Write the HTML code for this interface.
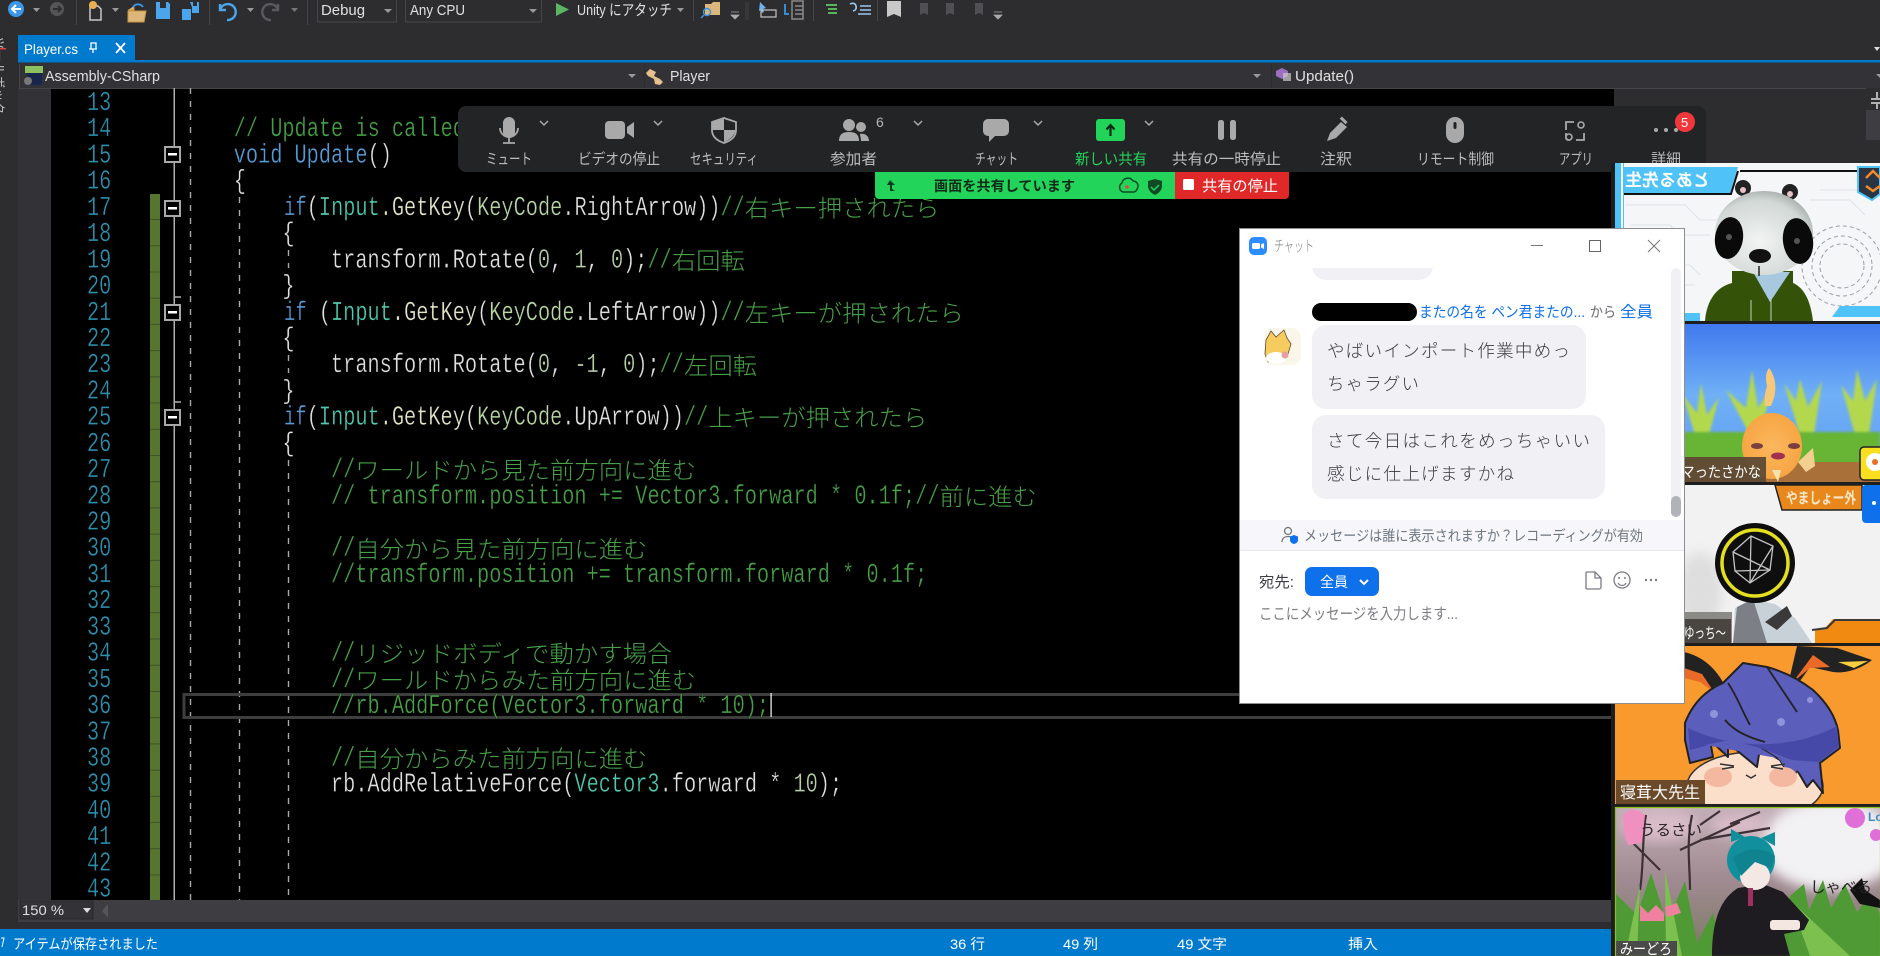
<!DOCTYPE html>
<html lang="ja"><head><meta charset="utf-8"><title>Player.cs</title>
<style>
html,body{margin:0;padding:0;background:#000;width:1880px;height:956px;overflow:hidden}
svg{display:block}
text{font-family:"Liberation Sans","Noto Sans CJK JP",sans-serif;white-space:pre}
.m{font-family:"Liberation Mono","Noto Sans CJK JP",monospace;font-size:27px;stroke:#000;stroke-width:.35px}
.j{font-family:"Noto Sans CJK JP","Liberation Sans",sans-serif;font-size:23.5px;font-weight:300;fill:#46a046}
.g{fill:#46a046}.w{fill:#e0e0e0}.t{fill:#4ec9b0}.b{fill:#569cd6}.k{fill:#b8d7a3}.n{fill:#b5cea8}.y{fill:#e4e4c8}
.ln{fill:#2b91af}
.u{font-size:14px;fill:#e0e0e0}
.z{font-size:15px;fill:#bcbcbc;font-family:"Noto Sans CJK JP","Liberation Sans",sans-serif;font-weight:400}
.c{font-size:17.5px;fill:#3a3a44;font-family:"Noto Sans CJK JP","Liberation Sans",sans-serif;font-weight:300}
</style></head><body>
<svg xmlns="http://www.w3.org/2000/svg" width="1880" height="956" viewBox="0 0 1880 956">
<defs>
<clipPath id="t1"><rect x="1615" y="163" width="265" height="158"/></clipPath>
<clipPath id="t2"><rect x="1615" y="324" width="265" height="158"/></clipPath>
<clipPath id="t3"><rect x="1615" y="485" width="265" height="158"/></clipPath>
<clipPath id="t4"><rect x="1615" y="646" width="265" height="158"/></clipPath>
<clipPath id="t5"><rect x="1615" y="807" width="265" height="149"/></clipPath>
<clipPath id="cl"><rect x="1240" y="268" width="430" height="251"/></clipPath>
<clipPath id="lft"><rect x="0" y="35" width="10" height="80"/></clipPath>
<linearGradient id="sky" x1="0" y1="0" x2="0" y2="1"><stop offset="0" stop-color="#3f79ee"/><stop offset=".45" stop-color="#6fb0f6"/><stop offset="1" stop-color="#5f9af0"/></linearGradient>
<radialGradient id="head" cx=".45" cy=".6" r=".7"><stop offset="0" stop-color="#f1f4f3"/><stop offset=".7" stop-color="#d2d8d6"/><stop offset="1" stop-color="#8f9593"/></radialGradient>
<radialGradient id="fish" cx=".5" cy=".5" r=".6"><stop offset="0" stop-color="#fbb75e"/><stop offset="1" stop-color="#f6a23e"/></radialGradient>
<linearGradient id="sk" x1="0" y1="0" x2="0" y2="1"><stop offset="0" stop-color="#c2aeb6"/><stop offset=".5" stop-color="#a08a92"/><stop offset="1" stop-color="#7a7a60"/></linearGradient>
<filter id="bl" x="-20%" y="-20%" width="140%" height="140%"><feGaussianBlur stdDeviation="6"/></filter>
<filter id="bs" x="-20%" y="-20%" width="140%" height="140%"><feGaussianBlur stdDeviation="1.200"/></filter>
</defs>

<!-- IDE chrome -->
<rect width="1880" height="956" fill="#2d2d30"/>
<rect x="18" y="88" width="33" height="812" fill="#333337"/>
<rect x="51" y="88" width="1563" height="812" fill="#000"/>
<rect x="18" y="900" width="1596" height="22" fill="#3e3e42"/>
<rect x="0" y="929" width="1880" height="27" fill="#007acc"/>
<rect x="18" y="60" width="1862" height="2.5" fill="#007acc"/>
<rect x="18" y="35" width="117" height="26" fill="#007acc"/>
<text x="24" y="54" class="u" style="fill:#fff" textLength="54" lengthAdjust="spacingAndGlyphs">Player.cs</text>
<path d="M93 53v-4m-4 0h8m-6 0v-6h5v6" stroke="#fff" stroke-width="1.3" fill="none"/>
<path d="M116 53l9-10m-9 0l9 10" stroke="#fff" stroke-width="1.8"/>
<path d="M1874 47h6l-3 4z" fill="#ddd"/>
<g clip-path="url(#lft)"><text transform="translate(-5 37) rotate(90)" font-size="12" fill="#c8c8c8" style="letter-spacing:1px">ツールボックス</text><rect x="0" y="48" width="6" height="1.5" fill="#e04040"/></g>
<!-- nav combos -->
<rect x="19" y="63" width="1861" height="25" fill="#333337"/>
<path d="M19.5 88.5V63.5M19 88.5H1880" stroke="#46464a" fill="none"/>
<rect x="644" y="63" width="1" height="25" fill="#2d2d30"/><rect x="1271" y="63" width="1" height="25" fill="#2d2d30"/>
<rect x="27" y="70" width="15" height="15" fill="#17264a"/><rect x="25" y="66" width="18" height="7" fill="#8dc060"/><circle cx="28" cy="81" r="4" fill="#787878"/>
<text x="45" y="81" class="u" textLength="115" lengthAdjust="spacingAndGlyphs" style="font-size:15px">Assembly-CSharp</text>
<path d="M628 74h8l-4 4z" fill="#999"/>
<path d="M650 69l6 3-2 4 6 3 3 3-3 3-5-1-1-5-6-3-2-3 4-4z" fill="#e7c08d"/>
<text x="670" y="81" class="u" textLength="40" lengthAdjust="spacingAndGlyphs" style="font-size:15px">Player</text>
<path d="M1253 74h8l-4 4z" fill="#999"/>
<path d="M1282 68l6 3v5l-6 3-6-3v-5z" fill="#9a6fc0"/><rect x="1283" y="73" width="8" height="8" fill="#ccc" opacity=".7"/>
<text x="1295" y="81" class="u" textLength="59" lengthAdjust="spacingAndGlyphs" style="font-size:15px">Update()</text>
<path d="M1876 74h4v4z" fill="#999"/>
<rect x="1866" y="88" width="14" height="22" fill="#2d2d30"/><rect x="1866" y="110" width="14" height="30" fill="#3e3e42"/>
<path d="M1871 99h9m-9 4h9M1877 92v6m0 6v5" stroke="#ddd" stroke-width="1.5"/>

<!-- top toolbar -->
<g>
<circle cx="16" cy="9" r="8" fill="#3a96e6"/><path d="M21 9h-9m4-4l-4 4 4 4" stroke="#fff" stroke-width="2" fill="none"/>
<path d="M33 8h7l-3.500 4z" fill="#999"/>
<circle cx="57" cy="9" r="7" fill="#555"/><path d="M53 9h8m-3-3l3 3-3 3" stroke="#2d2d30" stroke-width="2" fill="none"/>
<rect x="76" y="0" width="1" height="25" fill="#46464a"/>
<path d="M90 6h8l3 3v11H90z" fill="none" stroke="#c8c8c8" stroke-width="1.500"/><circle cx="93" cy="5" r="4" fill="#e8b050"/>
<path d="M112 8h7l-3.500 4z" fill="#999"/>
<path d="M128 10h6v-4M128 22h16l2-11h-18z" fill="#dcb67a" stroke="#c8963c"/><path d="M133 7a6 6 0 0 1 10 0" stroke="#3a96e6" stroke-width="1.800" fill="none"/>
<path d="M156 2h12l2 2v15h-14z" fill="#4aa5ec"/><rect x="160" y="2" width="6" height="6" fill="#2d2d30"/>
<path d="M182 9h9v11h-9z" fill="#4aa5ec"/><path d="M190 2h9v11h-7V7z" fill="#4aa5ec"/><rect x="193" y="2" width="4" height="4" fill="#2d2d30"/>
<rect x="209" y="0" width="1" height="25" fill="#46464a"/>
<path d="M220 4v6h6M220 10a8 8 0 1 1 7 10" stroke="#4aa5ec" stroke-width="2.400" fill="none"/>
<path d="M247 8h7l-3.500 4z" fill="#999"/>
<path d="M278 4v6h-6M278 10a8 8 0 1 0-7 10" stroke="#5a5a5e" stroke-width="2.400" fill="none"/>
<path d="M291 8h7l-3.500 4z" fill="#777"/>
<rect x="307" y="0" width="1" height="25" fill="#46464a"/>
<rect x="317.500" y="-1" width="79" height="23" fill="#2d2d30" stroke="#46464a"/>
<text x="321" y="15" class="u" textLength="44" lengthAdjust="spacingAndGlyphs" style="font-size:15px">Debug</text>
<path d="M384 9h8l-4 4z" fill="#999"/>
<rect x="405.500" y="-1" width="136" height="23" fill="#2d2d30" stroke="#46464a"/>
<text x="410" y="15" class="u" textLength="55" lengthAdjust="spacingAndGlyphs" style="font-size:15px">Any CPU</text>
<path d="M529 9h8l-4 4z" fill="#999"/>
<path d="M556 3l13 6.500-13 6.500z" fill="#5bb562"/>
<text x="577" y="15" class="u" textLength="95" lengthAdjust="spacingAndGlyphs" style="font-size:15px">Unity にアタッチ</text>
<path d="M677 8h7l-3.500 4z" fill="#999"/>
<rect x="693" y="0" width="1" height="21" fill="#46464a"/>
<path d="M705 4h6l2-2h7v13h-15z" fill="#dcb67a"/><circle cx="707" cy="12" r="3.500" fill="none" stroke="#3a96e6" stroke-width="1.500"/><path d="M704 15l-3 3" stroke="#3a96e6" stroke-width="1.500"/>
<path d="M731 12h8M731 15h8l-4 4z" fill="#aaa" stroke="#aaa" stroke-width=".8"/>
<rect x="745" y="2" width="4" height="18" fill="#3a3a3d" opacity=".8"/>
<path d="M760 2l6 6-3 1 1 3-2 1-1-3-2 1z" fill="#6db2f0"/><rect x="761" y="10" width="15" height="7" fill="none" stroke="#bbb" stroke-width="1.300"/>
<path d="M785 4v10h4" stroke="#3a96e6" stroke-width="1.800" fill="none"/><path d="M792 1h11v18h-11zM795 6h8M795 10h8M795 14h8" stroke="#8a8a8a" stroke-width="1.500" fill="none"/>
<rect x="813" y="0" width="1" height="21" fill="#46464a"/>
<path d="M826 5h11M828 9h9M828 13h9" stroke="#5db35d" stroke-width="2"/>
<path d="M850 4q5-2 6 2t-3 5M860 6h11M860 10h11M858 14h13" stroke="#9ac8ee" stroke-width="1.600" fill="none"/>
<rect x="877" y="0" width="1" height="21" fill="#46464a"/>
<path d="M887 1h14v16l-7-3-7 3z" fill="#c8c8c8"/>
<path d="M920 3h8v12l-4-2-4 2z" fill="#505054"/><path d="M946 3h8v12l-4-2-4 2z" fill="#505054"/><path d="M975 3h8v12l-4-2-4 2z" fill="#505054"/>
<path d="M994 12h8M994 15h8l-4 4z" fill="#aaa" stroke="#aaa" stroke-width=".8"/>
</g>

<!-- editor decorations -->
<rect x="150" y="194" width="10" height="706" fill="#587530"/>
<path d="M155 194V900" stroke="#3f5524" stroke-width="10" stroke-dasharray="1 25.22" stroke-dashoffset="-25"/>
<rect x="173.500" y="88" width="1.500" height="812" fill="#b0b0b0"/>
<path d="M175 297h6M175 402h6" stroke="#b0b0b0" stroke-width="1.500"/>
<path d="M190.500 88V900" stroke="#a8a8a8" stroke-width="1.400" stroke-dasharray="6 7"/>
<path d="M239.500 197V900" stroke="#a8a8a8" stroke-width="1.400" stroke-dasharray="6 7"/>
<path d="M288.500 250V268M288.500 355V373M288.500 460V900" stroke="#a8a8a8" stroke-width="1.400" stroke-dasharray="6 7"/>
<g fill="#000" stroke="#a8a8a8" stroke-width="2">
<rect x="165" y="147" width="15" height="15"/><rect x="165" y="201" width="15" height="15"/><rect x="165" y="305" width="15" height="15"/><rect x="165" y="410" width="15" height="15"/></g>
<g fill="#fff"><rect x="168" y="153" width="9" height="2.500"/><rect x="168" y="207" width="9" height="2.500"/><rect x="168" y="311" width="9" height="2.500"/><rect x="168" y="416" width="9" height="2.500"/></g>
<rect x="184" y="694.500" width="1432" height="23" fill="none" stroke="#3e3e3e" stroke-width="3"/>

<!-- line numbers -->
<text class="m ln" x="87" y="110" textLength="24.300" lengthAdjust="spacingAndGlyphs">13</text>
<text class="m ln" x="87" y="136.200" textLength="24.300" lengthAdjust="spacingAndGlyphs">14</text>
<text class="m ln" x="87" y="162.400" textLength="24.300" lengthAdjust="spacingAndGlyphs">15</text>
<text class="m ln" x="87" y="188.700" textLength="24.300" lengthAdjust="spacingAndGlyphs">16</text>
<text class="m ln" x="87" y="214.900" textLength="24.300" lengthAdjust="spacingAndGlyphs">17</text>
<text class="m ln" x="87" y="241.100" textLength="24.300" lengthAdjust="spacingAndGlyphs">18</text>
<text class="m ln" x="87" y="267.300" textLength="24.300" lengthAdjust="spacingAndGlyphs">19</text>
<text class="m ln" x="87" y="293.500" textLength="24.300" lengthAdjust="spacingAndGlyphs">20</text>
<text class="m ln" x="87" y="319.800" textLength="24.300" lengthAdjust="spacingAndGlyphs">21</text>
<text class="m ln" x="87" y="346" textLength="24.300" lengthAdjust="spacingAndGlyphs">22</text>
<text class="m ln" x="87" y="372.200" textLength="24.300" lengthAdjust="spacingAndGlyphs">23</text>
<text class="m ln" x="87" y="398.400" textLength="24.300" lengthAdjust="spacingAndGlyphs">24</text>
<text class="m ln" x="87" y="424.600" textLength="24.300" lengthAdjust="spacingAndGlyphs">25</text>
<text class="m ln" x="87" y="450.900" textLength="24.300" lengthAdjust="spacingAndGlyphs">26</text>
<text class="m ln" x="87" y="477.100" textLength="24.300" lengthAdjust="spacingAndGlyphs">27</text>
<text class="m ln" x="87" y="503.300" textLength="24.300" lengthAdjust="spacingAndGlyphs">28</text>
<text class="m ln" x="87" y="529.500" textLength="24.300" lengthAdjust="spacingAndGlyphs">29</text>
<text class="m ln" x="87" y="555.700" textLength="24.300" lengthAdjust="spacingAndGlyphs">30</text>
<text class="m ln" x="87" y="582" textLength="24.300" lengthAdjust="spacingAndGlyphs">31</text>
<text class="m ln" x="87" y="608.200" textLength="24.300" lengthAdjust="spacingAndGlyphs">32</text>
<text class="m ln" x="87" y="634.400" textLength="24.300" lengthAdjust="spacingAndGlyphs">33</text>
<text class="m ln" x="87" y="660.600" textLength="24.300" lengthAdjust="spacingAndGlyphs">34</text>
<text class="m ln" x="87" y="686.800" textLength="24.300" lengthAdjust="spacingAndGlyphs">35</text>
<text class="m ln" x="87" y="713" textLength="24.300" lengthAdjust="spacingAndGlyphs">36</text>
<text class="m ln" x="87" y="739.300" textLength="24.300" lengthAdjust="spacingAndGlyphs">37</text>
<text class="m ln" x="87" y="765.500" textLength="24.300" lengthAdjust="spacingAndGlyphs">38</text>
<text class="m ln" x="87" y="791.700" textLength="24.300" lengthAdjust="spacingAndGlyphs">39</text>
<text class="m ln" x="87" y="817.900" textLength="24.300" lengthAdjust="spacingAndGlyphs">40</text>
<text class="m ln" x="87" y="844.100" textLength="24.300" lengthAdjust="spacingAndGlyphs">41</text>
<text class="m ln" x="87" y="870.400" textLength="24.300" lengthAdjust="spacingAndGlyphs">42</text>
<text class="m ln" x="87" y="896.600" textLength="24.300" lengthAdjust="spacingAndGlyphs">43</text>

<!-- code -->
<text class="m g" x="233.700" y="136.200" textLength="413.800" lengthAdjust="spacingAndGlyphs">// Update is called once per frame</text>
<text class="m b" x="233.700" y="162.400" textLength="48.700" lengthAdjust="spacingAndGlyphs">void</text>
<text class="m b" x="294.500" y="162.400" textLength="73" lengthAdjust="spacingAndGlyphs">Update</text>
<text class="m w" x="367.600" y="162.400" textLength="24.300" lengthAdjust="spacingAndGlyphs">()</text>
<text class="m w" x="233.700" y="188.700" textLength="12.200" lengthAdjust="spacingAndGlyphs">{</text>
<!-- 17 -->
<text class="m b" x="284" y="214.900" textLength="22.700" lengthAdjust="spacingAndGlyphs">if</text>
<text class="m w" x="306.700" y="214.900" textLength="12.200" lengthAdjust="spacingAndGlyphs">(</text>
<text class="m t" x="318.900" y="214.900" textLength="60.900" lengthAdjust="spacingAndGlyphs">Input</text>
<text class="m y" x="379.700" y="214.900" textLength="85.200" lengthAdjust="spacingAndGlyphs">.GetKey</text>
<text class="m w" x="464.900" y="214.900" textLength="12.200" lengthAdjust="spacingAndGlyphs">(</text>
<text class="m k" x="477.100" y="214.900" textLength="85.200" lengthAdjust="spacingAndGlyphs">KeyCode</text>
<text class="m w" x="562.300" y="214.900" textLength="133.900" lengthAdjust="spacingAndGlyphs">.RightArrow</text>
<text class="m w" x="696.100" y="214.900" textLength="24.300" lengthAdjust="spacingAndGlyphs">))</text>
<text class="m g" x="720.500" y="214.900" textLength="24.300" lengthAdjust="spacingAndGlyphs">//</text>
<text class="j" x="744.800" y="216.500" textLength="194.700" lengthAdjust="spacingAndGlyphs">右キー押されたら</text>
<text class="m w" x="282.400" y="241.100" textLength="12.200" lengthAdjust="spacingAndGlyphs">{</text>
<!-- 19 -->
<text class="m w" x="331" y="267.300" textLength="206.900" lengthAdjust="spacingAndGlyphs">transform.Rotate(</text>
<text class="m n" x="537.900" y="267.300" textLength="12.200" lengthAdjust="spacingAndGlyphs">0</text>
<text class="m w" x="550.100" y="267.300" textLength="12.200" lengthAdjust="spacingAndGlyphs">,</text>
<text class="m n" x="574.400" y="267.300" textLength="12.200" lengthAdjust="spacingAndGlyphs">1</text>
<text class="m w" x="586.600" y="267.300" textLength="12.200" lengthAdjust="spacingAndGlyphs">,</text>
<text class="m n" x="611" y="267.300" textLength="12.200" lengthAdjust="spacingAndGlyphs">0</text>
<text class="m w" x="623.100" y="267.300" textLength="24.300" lengthAdjust="spacingAndGlyphs">);</text>
<text class="m g" x="647.500" y="267.300" textLength="24.300" lengthAdjust="spacingAndGlyphs">//</text>
<text class="j" x="671.800" y="268.900" textLength="73" lengthAdjust="spacingAndGlyphs">右回転</text>
<text class="m w" x="282.400" y="293.500" textLength="12.200" lengthAdjust="spacingAndGlyphs">}</text>
<!-- 21 -->
<text class="m b" x="284" y="319.800" textLength="22.700" lengthAdjust="spacingAndGlyphs">if</text>
<text class="m w" x="318.900" y="319.800" textLength="12.200" lengthAdjust="spacingAndGlyphs">(</text>
<text class="m t" x="331" y="319.800" textLength="60.900" lengthAdjust="spacingAndGlyphs">Input</text>
<text class="m y" x="391.900" y="319.800" textLength="85.200" lengthAdjust="spacingAndGlyphs">.GetKey</text>
<text class="m w" x="477.100" y="319.800" textLength="12.200" lengthAdjust="spacingAndGlyphs">(</text>
<text class="m k" x="489.300" y="319.800" textLength="85.200" lengthAdjust="spacingAndGlyphs">KeyCode</text>
<text class="m w" x="574.400" y="319.800" textLength="121.700" lengthAdjust="spacingAndGlyphs">.LeftArrow</text>
<text class="m w" x="696.100" y="319.800" textLength="24.300" lengthAdjust="spacingAndGlyphs">))</text>
<text class="m g" x="720.500" y="319.800" textLength="24.300" lengthAdjust="spacingAndGlyphs">//</text>
<text class="j" x="744.800" y="321.400" textLength="219" lengthAdjust="spacingAndGlyphs">左キーが押されたら</text>
<text class="m w" x="282.400" y="346" textLength="12.200" lengthAdjust="spacingAndGlyphs">{</text>
<!-- 23 -->
<text class="m w" x="331" y="372.200" textLength="206.900" lengthAdjust="spacingAndGlyphs">transform.Rotate(</text>
<text class="m n" x="537.900" y="372.200" textLength="12.200" lengthAdjust="spacingAndGlyphs">0</text>
<text class="m w" x="550.100" y="372.200" textLength="12.200" lengthAdjust="spacingAndGlyphs">,</text>
<text class="m n" x="574.400" y="372.200" textLength="24.300" lengthAdjust="spacingAndGlyphs">-1</text>
<text class="m w" x="598.800" y="372.200" textLength="12.200" lengthAdjust="spacingAndGlyphs">,</text>
<text class="m n" x="623.100" y="372.200" textLength="12.200" lengthAdjust="spacingAndGlyphs">0</text>
<text class="m w" x="635.300" y="372.200" textLength="24.300" lengthAdjust="spacingAndGlyphs">);</text>
<text class="m g" x="659.600" y="372.200" textLength="24.300" lengthAdjust="spacingAndGlyphs">//</text>
<text class="j" x="684" y="373.800" textLength="73" lengthAdjust="spacingAndGlyphs">左回転</text>
<text class="m w" x="282.400" y="398.400" textLength="12.200" lengthAdjust="spacingAndGlyphs">}</text>
<!-- 25 -->
<text class="m b" x="284" y="424.600" textLength="22.700" lengthAdjust="spacingAndGlyphs">if</text>
<text class="m w" x="306.700" y="424.600" textLength="12.200" lengthAdjust="spacingAndGlyphs">(</text>
<text class="m t" x="318.900" y="424.600" textLength="60.900" lengthAdjust="spacingAndGlyphs">Input</text>
<text class="m y" x="379.700" y="424.600" textLength="85.200" lengthAdjust="spacingAndGlyphs">.GetKey</text>
<text class="m w" x="464.900" y="424.600" textLength="12.200" lengthAdjust="spacingAndGlyphs">(</text>
<text class="m k" x="477.100" y="424.600" textLength="85.200" lengthAdjust="spacingAndGlyphs">KeyCode</text>
<text class="m w" x="562.300" y="424.600" textLength="97.400" lengthAdjust="spacingAndGlyphs">.UpArrow</text>
<text class="m w" x="659.600" y="424.600" textLength="24.300" lengthAdjust="spacingAndGlyphs">))</text>
<text class="m g" x="684" y="424.600" textLength="24.300" lengthAdjust="spacingAndGlyphs">//</text>
<text class="j" x="708.300" y="426.200" textLength="219" lengthAdjust="spacingAndGlyphs">上キーが押されたら</text>
<text class="m w" x="282.400" y="450.900" textLength="12.200" lengthAdjust="spacingAndGlyphs">{</text>
<!-- comments -->
<text class="m g" x="331" y="477.100" textLength="24.300" lengthAdjust="spacingAndGlyphs">//</text>
<text class="j" x="355.300" y="478.700" textLength="340.800" lengthAdjust="spacingAndGlyphs">ワールドから見た前方向に進む</text>
<text class="m g" x="331" y="503.300" textLength="584.200" lengthAdjust="spacingAndGlyphs">// transform.position += Vector3.forward * 0.1f;</text>
<text class="m g" x="915.200" y="503.300" textLength="24.300" lengthAdjust="spacingAndGlyphs">//</text>
<text class="j" x="939.500" y="504.900" textLength="97.400" lengthAdjust="spacingAndGlyphs">前に進む</text>
<text class="m g" x="331" y="555.700" textLength="24.300" lengthAdjust="spacingAndGlyphs">//</text>
<text class="j" x="355.300" y="557.300" textLength="292.100" lengthAdjust="spacingAndGlyphs">自分から見た前方向に進む</text>
<text class="m g" x="331" y="582" textLength="596.300" lengthAdjust="spacingAndGlyphs">//transform.position += transform.forward * 0.1f;</text>
<text class="m g" x="331" y="660.600" textLength="24.300" lengthAdjust="spacingAndGlyphs">//</text>
<text class="j" x="355.300" y="662.200" textLength="316.400" lengthAdjust="spacingAndGlyphs">リジッドボディで動かす場合</text>
<text class="m g" x="331" y="686.800" textLength="24.300" lengthAdjust="spacingAndGlyphs">//</text>
<text class="j" x="355.300" y="688.400" textLength="340.800" lengthAdjust="spacingAndGlyphs">ワールドからみた前方向に進む</text>
<text class="m g" x="331" y="713" textLength="438.100" lengthAdjust="spacingAndGlyphs">//rb.AddForce(Vector3.forward * 10);</text>
<rect x="770.500" y="693" width="1.200" height="24" fill="#fff"/>
<text class="m g" x="331" y="765.500" textLength="24.300" lengthAdjust="spacingAndGlyphs">//</text>
<text class="j" x="355.300" y="767.100" textLength="292.100" lengthAdjust="spacingAndGlyphs">自分からみた前方向に進む</text>
<text class="m w" x="331" y="791.700" textLength="243.400" lengthAdjust="spacingAndGlyphs">rb.AddRelativeForce(</text>
<text class="m t" x="574.400" y="791.700" textLength="85.200" lengthAdjust="spacingAndGlyphs">Vector3</text>
<text class="m w" x="659.600" y="791.700" textLength="97.400" lengthAdjust="spacingAndGlyphs">.forward</text>
<text class="m w" x="769.100" y="791.700" textLength="12.200" lengthAdjust="spacingAndGlyphs">*</text>
<text class="m n" x="793.500" y="791.700" textLength="24.300" lengthAdjust="spacingAndGlyphs">10</text>
<text class="m w" x="817.800" y="791.700" textLength="24.300" lengthAdjust="spacingAndGlyphs">);</text>

<!-- bottom scrollbar + status -->
<rect x="20" y="901" width="73" height="18" fill="#333337" stroke="#2a2a2c"/>
<text x="22" y="915" class="u" textLength="42" lengthAdjust="spacingAndGlyphs">150 %</text>
<path d="M83 908h8l-4 5z" fill="#ddd"/>
<path d="M108 904v14l-6-7z" fill="#55555a"/>
<path d="M1 938l3 0-2 9" stroke="#fff" fill="none"/>
<text x="13" y="949" font-size="14" fill="#fff" textLength="145" lengthAdjust="spacingAndGlyphs">アイテムが保存されました</text>
<text x="950" y="949" font-size="14" fill="#fff" textLength="35" lengthAdjust="spacingAndGlyphs">36 行</text>
<text x="1063" y="949" font-size="14" fill="#fff" textLength="35" lengthAdjust="spacingAndGlyphs">49 列</text>
<text x="1177" y="949" font-size="14" fill="#fff" textLength="50" lengthAdjust="spacingAndGlyphs">49 文字</text>
<text x="1348" y="949" font-size="14" fill="#fff" textLength="30" lengthAdjust="spacingAndGlyphs">挿入</text>

<!-- Zoom toolbar -->
<rect x="458" y="106" width="1248" height="66" rx="8" fill="#232426"/>
<g fill="#a9a9a9" stroke="none">
<rect x="503" y="117" width="12" height="21" rx="6"/>
<path d="M500 128a9 9 0 0 0 18 0M509 137v6M503 143h12" fill="none" stroke="#a9a9a9" stroke-width="1.800"/>
<rect x="605" y="121" width="20" height="18" rx="4"/><path d="M627 127l7-5v16l-7-5z"/>
<path d="M724 118l12 4v8c0 7-6 11-12 13-6-2-12-6-12-13v-8z" fill="none" stroke="#a9a9a9" stroke-width="1.800"/>
<path d="M724 119v11h-11.500v-8zM724 130h11.500c-1 6-6 10-11.500 12z"/>
<circle cx="849" cy="125" r="6"/><circle cx="861" cy="127" r="5"/>
<path d="M839 141c0-7 4-9 10-9s10 2 10 9z"/><path d="M860 134c5-1 9 2 9 7h-8c0-3-1-5-1-7z"/>
<path d="M988 119h16a5 5 0 0 1 5 5v7a5 5 0 0 1-5 5h-9l-6 6v-6h-1a5 5 0 0 1-5-5v-7a5 5 0 0 1 5-5z"/>
<rect x="1218" y="120" width="6" height="20" rx="2.500"/><rect x="1230" y="120" width="6" height="20" rx="2.500"/>
<path d="M1327 141l3-8 11-11 6 5-11 11z"/><rect x="1340" y="119" width="8" height="3" transform="rotate(45 1344 120)"/>
<rect x="1446" y="117" width="18" height="26" rx="9"/><rect x="1453.500" y="122" width="3" height="7" rx="1.500" fill="#232426"/>
<circle cx="1656" cy="130" r="2"/><circle cx="1666" cy="130" r="2"/><circle cx="1676" cy="130" r="2"/>
</g>
<path d="M1566 133v5a2 2 0 0 0 2 2h2M1567 122h-1v8M1567 122h7M1576 140h8v-7" fill="none" stroke="#a9a9a9" stroke-width="1.800"/><circle cx="1581" cy="125" r="3" fill="none" stroke="#a9a9a9" stroke-width="1.600"/><circle cx="1569" cy="137" r="3" fill="#232426" stroke="#a9a9a9" stroke-width="1.600"/>
<g fill="none" stroke="#a9a9a9" stroke-width="1.500"><path d="M540 121l4 4 4-4M654 121l4 4 4-4M914 121l4 4 4-4M1034 121l4 4 4-4M1145 121l4 4 4-4"/></g>
<text x="876" y="127" font-size="14" fill="#b4b4b4">6</text>
<rect x="1096" y="119" width="29" height="22" rx="3" fill="#22d45a"/>
<path d="M1110.500 136v-11m-4 4.500l4-4.500 4 4.500" stroke="#0a2a14" stroke-width="2.200" fill="none"/>
<text class="z" x="486" y="164" textLength="46" lengthAdjust="spacingAndGlyphs">ミュート</text>
<text class="z" x="578" y="164" textLength="82" lengthAdjust="spacingAndGlyphs">ビデオの停止</text>
<text class="z" x="690" y="164" textLength="68" lengthAdjust="spacingAndGlyphs">セキュリティ</text>
<text class="z" x="830" y="164" textLength="47" lengthAdjust="spacingAndGlyphs">参加者</text>
<text class="z" x="975" y="164" textLength="43" lengthAdjust="spacingAndGlyphs">チャット</text>
<text class="z" x="1075" y="164" textLength="72" lengthAdjust="spacingAndGlyphs" style="fill:#22d45a">新しい共有</text>
<text class="z" x="1172" y="164" textLength="109" lengthAdjust="spacingAndGlyphs">共有の一時停止</text>
<text class="z" x="1320" y="164" textLength="32" lengthAdjust="spacingAndGlyphs">注釈</text>
<text class="z" x="1417" y="164" textLength="77" lengthAdjust="spacingAndGlyphs">リモート制御</text>
<text class="z" x="1559" y="164" textLength="34" lengthAdjust="spacingAndGlyphs">アプリ</text>
<text class="z" x="1651" y="164" textLength="30" lengthAdjust="spacingAndGlyphs">詳細</text>
<circle cx="1685" cy="122" r="10" fill="#f0383c"/>
<text x="1681" y="127" font-size="13" fill="#fff">5</text>

<!-- share banner -->
<path d="M875 172H1175V199H879a4 4 0 0 1-4-4z" fill="#22d45a"/>
<path d="M1175 172H1289V195a4 4 0 0 1-4 4H1175z" fill="#e02828"/>
<path d="M890 180l5 5h-3v4l3 2h-5v-6h-3z" fill="#0b3d1c"/>
<text x="934" y="191" font-size="14" font-weight="700" fill="#0f2a18" textLength="141" lengthAdjust="spacingAndGlyphs">画面を共有しています</text>
<path d="M1123 192a5 5 0 0 1-1-9 6 6 0 0 1 11-2 5 5 0 0 1 4 8 4 4 0 0 1-3 3z" fill="none" stroke="#0f4a25" stroke-width="1.500"/><circle cx="1127" cy="187" r="1.800" fill="#f04040"/>
<path d="M1155 179l7 2v5c0 4-3 7-7 9-4-2-7-5-7-9v-5z" fill="#0f4a25"/><path d="M1151 187l3 3 5-5" stroke="#22d45a" stroke-width="1.500" fill="none"/>
<rect x="1183" y="179" width="11" height="11" rx="1.500" fill="#fff"/>
<text x="1202" y="191" font-size="15" fill="#fff" textLength="76" lengthAdjust="spacingAndGlyphs">共有の停止</text>

<!-- Video tiles -->
<rect x="1611" y="163" width="269" height="793" fill="#1e1e1e"/>
<!-- tile 1 -->
<g clip-path="url(#t1)">
<rect x="1615" y="163" width="265" height="158" fill="#f4f6f8"/>
<g fill="none" stroke="#dfe3e8" stroke-width="1">
<path d="M1625 205h60l15 15h20M1630 225h40l10 10h30M1630 245h50M1640 265h50l10 10M1625 285h70M1810 200h40l15 15M1820 190h50"/>
</g>
<rect x="1615" y="163" width="9" height="158" fill="#4fc3f7"/><rect x="1621" y="163" width="2" height="158" fill="#fff"/>
<path d="M1624 167H1738L1730 194H1624z" fill="#4fc3f7"/>
<path d="M1740 171H1880M1738 171L1731 194H1624" fill="none" stroke="#111" stroke-width="2"/>
<text transform="translate(1710 186) scale(-1 1)" font-size="17" font-weight="700" fill="#fff">とある先生</text>
<path d="M1858 167h22v27l-8 6-14-8z" fill="#2a3442" stroke="#4fc3f7" stroke-width="2"/><path d="M1866 178l7-7 7 7M1866 186l7 5 7-5" stroke="#f28c28" stroke-width="2.500" fill="none"/>
<g fill="none" stroke="#9aa0a8" stroke-width="1" stroke-dasharray="4 3"><circle cx="1842" cy="266" r="22"/><circle cx="1842" cy="266" r="30"/><circle cx="1842" cy="266" r="40"/></g>
<path d="M1624 313H1700V321H1624zM1840 306L1880 306V317H1832z" fill="#4fc3f7"/>
<circle cx="1743" cy="188" r="8" fill="#222"/><circle cx="1743" cy="190" r="3" fill="#e8c0c8"/><circle cx="1790" cy="192" r="8" fill="#222"/><circle cx="1790" cy="194" r="3" fill="#e8c0c8"/>
<path d="M1705 321c2-22 12-34 27-38v-12h61v12c12 5 18 20 20 38z" fill="#355209"/>
<path d="M1753 272l17 30 20-30z" fill="#a8c8e0"/>
<path d="M1751 300v21M1771 300v21" stroke="#c8d0c0" stroke-width="1"/>
<ellipse cx="1764" cy="233" rx="49" ry="42" fill="url(#head)"/>
<ellipse cx="1729" cy="238" rx="14" ry="21" transform="rotate(8 1729 238)" fill="#0a0a0a"/>
<ellipse cx="1798" cy="241" rx="15" ry="23" transform="rotate(-8 1798 241)" fill="#0a0a0a"/>
<circle cx="1729" cy="237" r="3" fill="#555"/><circle cx="1797" cy="241" r="3" fill="#555"/>
<ellipse cx="1760" cy="256" rx="11" ry="7" fill="#111"/><path d="M1759 266v10" stroke="#222" stroke-width="1.500"/>
</g>
<!-- tile 2 -->
<g clip-path="url(#t2)">
<rect x="1615" y="324" width="265" height="158" fill="url(#sky)"/>
<g fill="#b4d84e" filter="url(#bs)">
<path d="M1695 435l-12-40 14 18 4-30 6 32 12-18-10 38z"/>
<path d="M1750 435l-24-45 20 18 6-38 6 38 14-22-12 49z"/>
<path d="M1800 435l-16-52 12 18 4-22 8 28 14-26-8 54z"/>
<path d="M1855 435l-14-50 12 16 4-32 8 32 12-22-8 56z"/>
</g>
<rect x="1684" y="432" width="196" height="32" fill="#68b534" filter="url(#bs)"/>
<rect x="1684" y="462" width="196" height="20" fill="#a9703a"/>
<path d="M1767 386c-2-8-1-14 2-18 6 8 8 18 5 30l-3 8h-6c-1-6 0-14 2-20z" fill="#f6c878"/>
<ellipse cx="1772" cy="446" rx="30" ry="33" fill="url(#fish)"/>
<path d="M1798 462l15-14 2 18-9 6z" fill="#f4d090"/><path d="M1772 470l6 12 3-12z" fill="#f8e0b0"/>
<ellipse cx="1757" cy="446" rx="6" ry="3" fill="#7a4040"/><ellipse cx="1794" cy="446" rx="6" ry="3" fill="#7a4040"/><ellipse cx="1778" cy="456" rx="7" ry="3.500" fill="#a03050"/>
<rect x="1860" y="447" width="30" height="33" rx="4" fill="#f8e020" stroke="#222" stroke-width="1.500"/><circle cx="1875" cy="462" r="9" fill="#fff"/><circle cx="1875" cy="462" r="3" fill="#e87020"/>
<rect x="1684" y="457" width="82" height="25" fill="#5e4a34" opacity=".95"/>
<text x="1668" y="477" font-size="15" fill="#fff" textLength="93" lengthAdjust="spacingAndGlyphs">ハマったさかな</text>
</g>
<!-- tile 3 -->
<g clip-path="url(#t3)">
<rect x="1615" y="485" width="265" height="158" fill="#f2f2f2"/>
<ellipse cx="1700" cy="590" rx="22" ry="38" fill="#dedede" filter="url(#bl)"/>
<path d="M1775 485H1862V510H1782z" fill="#e8881c" stroke="#222" stroke-width="1.500"/>
<text x="1786" y="503" font-size="15" font-weight="700" fill="#f8e6c8" textLength="70" lengthAdjust="spacingAndGlyphs">やましょー外</text>
<rect x="1862" y="485" width="22" height="38" rx="4" fill="#0e71eb"/><circle cx="1874" cy="503" r="2" fill="#fff"/>
<path d="M1684 612h48v31h-48z" fill="#8a8a86"/>
<path d="M1733 643l2-35 18-8 22 4 20 14 17 25z" fill="#c8d0d8"/><path d="M1733 643l4-36 16-8 14 44z" fill="#7c8086"/>
<path d="M1765 622l22-16 5 10-15 14z" fill="#3a3a3a"/>
<circle cx="1755" cy="563" r="40" fill="#0e0e0e"/><circle cx="1755" cy="563" r="33" fill="none" stroke="#e4e020" stroke-width="3.500"/>
<g stroke="#c4c4c4" stroke-width="1.300" fill="none"><path d="M1733 552l18-16 22 10-3 24-20 13-15-12zM1751 536l-1 47M1733 552l37 18M1773 546l-23 37M1735 571l35-1"/></g>
<path d="M1815 643v-14l10-1 8-9h47v24z" fill="#f08a10"/><path d="M1812 630l15-2 8-8h45" stroke="#3a3a3a" stroke-width="2" fill="none"/>
<rect x="1684" y="619" width="47" height="24" fill="#4a4540"/>
<text x="1684" y="638" font-size="15" fill="#fff" textLength="42" lengthAdjust="spacingAndGlyphs">ゆっち～</text>
</g>
<!-- tile 4 -->
<g clip-path="url(#t4)">
<rect x="1615" y="646" width="265" height="158" fill="#f99a2f"/>
<path d="M1684 652c18 4 32 16 41 34l-8 8-33-24z" fill="#222"/><path d="M1684 668l18 6 12 18-14-10-16-4z" fill="#ec6a28"/>
<path d="M1788 685l9-39 40 2 35 12c-10 8-25 14-39 12l-23-5-15 21z" fill="#222"/>
<path d="M1793 682l20-27 17 12-20 1z" fill="#ec6a28"/><path d="M1838 662l30-1-14 7z" fill="#f4d040"/>
<ellipse cx="1755" cy="786" rx="68" ry="34" fill="#fbdfca" stroke="#333" stroke-width="1.500"/>
<path d="M1685 740L1685 723C1690 710 1698 700 1705 694C1712 688 1720 684 1723 683L1743 663L1767 667C1785 672 1800 680 1813 690C1826 702 1835 716 1838 730L1840 748L1820 763L1823 793L1813 780L1807 787L1797 770L1792 780L1780 760L1760 748L1757 767L1740 753L1728 743L1728 757L1710 740L1713 757L1690 763z" fill="#5b5eba" stroke="#222" stroke-width="2" stroke-linejoin="round"/>
<path d="M1688 728c45 22 105 22 149-2l2 20-20 16-27-2-32-12-32-8-38 10z" fill="#4749a8"/>
<path d="M1705 745l25-5 30 8 20 12 12 20 5-10 10 10-2-17z" fill="#5b5eba"/>
<path d="M1728 683c10 15 15 30 22 42M1767 667c10 15 20 30 30 45M1725 720c10 12 25 18 40 22" stroke="#222" stroke-width="1.800" fill="none"/>
<circle cx="1714" cy="714" r="4" fill="#8f93dc"/><circle cx="1781" cy="722" r="4" fill="#8f93dc"/><circle cx="1810" cy="700" r="3" fill="#8f93dc"/>
<ellipse cx="1718" cy="777" rx="14" ry="10" fill="#f4b8a0"/><ellipse cx="1783" cy="777" rx="14" ry="10" fill="#f4b8a0"/>
<path d="M1720 764l14 2M1722 769l12-2M1771 766l14-2M1771 767l12 2M1746 775l5 3 5-3" stroke="#333" stroke-width="1.500" fill="none"/>
<rect x="1616" y="780" width="89" height="24" fill="#6b4a2a"/>
<text x="1620" y="798" font-size="16" fill="#fff" textLength="80" lengthAdjust="spacingAndGlyphs">寝茸大先生</text>
</g>
<!-- tile 5 -->
<g clip-path="url(#t5)">
<rect x="1615" y="807" width="265" height="149" fill="url(#sk)"/>
<ellipse cx="1830" cy="845" rx="70" ry="45" fill="#f2f1f3" filter="url(#bl)"/>
<g fill="#d8bcc8" filter="url(#bl)"><ellipse cx="1660" cy="825" rx="38" ry="16"/><ellipse cx="1740" cy="825" rx="30" ry="12"/></g>
<g fill="none" stroke="#3e3034" stroke-width="2.200"><path d="M1640 890c4-25 2-55 6-75M1690 890c0-25-4-45 2-75M1680 850l60-28M1700 840l70-12M1660 870l-30-30M1700 825l20-14M1730 824l30-12"/></g>
<path d="M1623 815l8-6 8 2 6 4-3 28-14 2-4-12z" fill="#f090c0"/>
<path d="M1615 956V893l22 22 14-42 16 50 18-42 12 62 16-30 10 43zM1770 956l20-60 14-12 5 26 14-30 8 28 14-24 12 28 13-18 10 20v42z" fill="#4f9a34"/>
<path d="M1665 870l17 86h-16zM1790 900l60 56h-40zM1640 885l-15 71h12z" fill="#7cc050"/>
<path d="M1712 956c0-30 6-56 26-68l25-4 20 8 26 28-5 10-20 4 6 22z" fill="#1e1c20"/>
<rect x="1770" y="920" width="30" height="10" rx="3" fill="#f4e6e0"/>
<ellipse cx="1751" cy="860" rx="24" ry="24" fill="#128f9c"/><path d="M1731 842l0-13 14 8zM1775 846l0-14-14 6z" fill="#128f9c"/><ellipse cx="1755" cy="876" rx="15" ry="14" fill="#f4e8e4"/><path d="M1733 858c10-10 30-12 42-2l-4 12-16-6-14 14z" fill="#0f8490"/>
<rect x="1748" y="888" width="5" height="18" fill="#a03060"/>
<circle cx="1855" cy="818" r="10" fill="#e070d8"/><circle cx="1876" cy="835" r="6" fill="#e070d8"/>
<text x="1868" y="821" font-size="12" font-weight="700" fill="#3a8ac8">Lo</text>
<path d="M1640 905l8 8 8-8 8 8v8h-24zM1665 907l12-4 4 10-14 4z" fill="#f080a0"/>
<path d="M1850 890l12-12 3 12 15 10v8l-20-4z" fill="#111"/>
<text x="1640" y="835" font-size="15" font-weight="400" fill="#2a2226" textLength="62" lengthAdjust="spacingAndGlyphs">うるさい</text>
<text x="1810" y="892" font-size="15" font-weight="400" fill="#222" textLength="62" lengthAdjust="spacingAndGlyphs">しゃべる</text>
<rect x="1616" y="941" width="61" height="15" fill="#4a4a48"/>
<text x="1620" y="954" font-size="15" fill="#fff" textLength="52" lengthAdjust="spacingAndGlyphs">みーどろ</text>
</g>
<rect x="1615.500" y="807.500" width="265" height="149" fill="none" stroke="#8cc020" stroke-width="1.200"/>

<!-- Chat window -->
<rect x="1239.500" y="228.500" width="445" height="475" fill="#fff" stroke="#8e8e8e"/>
<rect x="1249" y="237" width="18" height="18" rx="5" fill="#2d8cff"/><rect x="1252" y="243" width="8" height="6" rx="1.500" fill="#fff"/><path d="M1261 244.500l3-1.500v6l-3-1.500z" fill="#fff"/>
<text x="1274" y="251" font-size="15" fill="#808080" font-weight="300" textLength="40" lengthAdjust="spacingAndGlyphs" style="font-family:'Noto Sans CJK JP',sans-serif">チャット</text>
<rect x="1531" y="245" width="12" height="1" fill="#777"/>
<rect x="1589.500" y="240.500" width="11" height="11" fill="none" stroke="#666"/>
<path d="M1648 240l12 12m-12 0l12-12" stroke="#777" fill="none"/>
<g clip-path="url(#cl)">
<rect x="1312" y="240" width="121" height="40" rx="14" fill="#f1f1f5"/>
</g>
<rect x="1312" y="303" width="105" height="18" rx="9" fill="#000"/>
<text x="1419" y="317" font-size="15" fill="#0e71eb" textLength="166" lengthAdjust="spacingAndGlyphs">またの名を ペン君またの...</text>
<text x="1590" y="317" font-size="14" fill="#6a6a72" textLength="26" lengthAdjust="spacingAndGlyphs">から</text>
<text x="1620" y="317" font-size="15.500" fill="#0e71eb" textLength="33" lengthAdjust="spacingAndGlyphs">全員</text>
<!-- avatar fox -->
<rect x="1264" y="328" width="37" height="37" rx="9" fill="#faf6ea"/>
<path d="M1266 340l5-9 5 6 8-7 3 8 4 6-3 10-6 8h-14l-3-8z" fill="#f6cc60" stroke="#5c4a30" stroke-width=".800"/>
<ellipse cx="1276" cy="358" rx="10" ry="6" fill="#fff"/><circle cx="1285" cy="355" r="3.500" fill="#e69f9f"/>
<!-- bubbles -->
<rect x="1312" y="325" width="274" height="84" rx="14" fill="#f1f1f5"/>
<rect x="1312" y="415" width="293" height="84" rx="14" fill="#f1f1f5"/>
<text class="c" x="1327" y="357" textLength="243">やばいインポート作業中めっ</text>
<text class="c" x="1327" y="390" textLength="92">ちゃラグい</text>
<text class="c" x="1327" y="447" textLength="263">さて今日はこれをめっちゃいい</text>
<text class="c" x="1327" y="480" textLength="187">感じに仕上げますかね</text>
<!-- scrollbar -->
<rect x="1671" y="268" width="10" height="249" rx="5" fill="#f1f1f5"/>
<rect x="1671" y="496" width="10" height="21" rx="5" fill="#b2b2ba"/>
<!-- info bar -->
<rect x="1240" y="520" width="444" height="31" fill="#f7f7fb"/><rect x="1240" y="550" width="444" height="1" fill="#e9e9f2"/>
<circle cx="1288" cy="531" r="3.500" fill="none" stroke="#6e7680" stroke-width="1.300"/><path d="M1282 542c0-4 3-5.500 6-5.500s3 .5 3 1" fill="none" stroke="#6e7680" stroke-width="1.300"/>
<path d="M1294 535l4 1.500v4c0 1.500-2 3-4 3.500-2-.5-4-2-4-3.500v-4z" fill="#0e71eb"/>
<text x="1304" y="541" font-size="14.500" fill="#6e7680" textLength="339" lengthAdjust="spacingAndGlyphs">メッセージは誰に表示されますか？レコーディングが有効</text>
<!-- compose -->
<text x="1259" y="587" font-size="15" fill="#3c3c44" textLength="35" lengthAdjust="spacingAndGlyphs">宛先:</text>
<rect x="1305" y="567" width="74" height="29" rx="7" fill="#0e71eb"/>
<text x="1320" y="587" font-size="14" fill="#fff" textLength="28" lengthAdjust="spacingAndGlyphs">全員</text>
<path d="M1360 580l4 4 4-4" stroke="#fff" stroke-width="2" fill="none"/>
<path d="M1587 572h8l6 6v9a2 2 0 0 1-2 2h-12a1 1 0 0 1-1-1v-15a1 1 0 0 1 1-1zM1595 572v6h6" fill="none" stroke="#7a7a85" stroke-width="1.300"/>
<circle cx="1622" cy="580" r="8" fill="none" stroke="#7a7a85" stroke-width="1.300"/><circle cx="1619" cy="578" r="1" fill="#7a7a85"/><circle cx="1625" cy="578" r="1" fill="#7a7a85"/><path d="M1618 583a4.500 4.500 0 0 0 8 0" fill="none" stroke="#7a7a85" stroke-width="1.200"/>
<circle cx="1646" cy="580" r="1.200" fill="#7a7a85"/><circle cx="1651" cy="580" r="1.200" fill="#7a7a85"/><circle cx="1656" cy="580" r="1.200" fill="#7a7a85"/>
<text x="1259" y="619" font-size="15.500" fill="#7c7c86" font-weight="400" textLength="199" lengthAdjust="spacingAndGlyphs">ここにメッセージを入力します...</text>
</svg>
</body></html>
